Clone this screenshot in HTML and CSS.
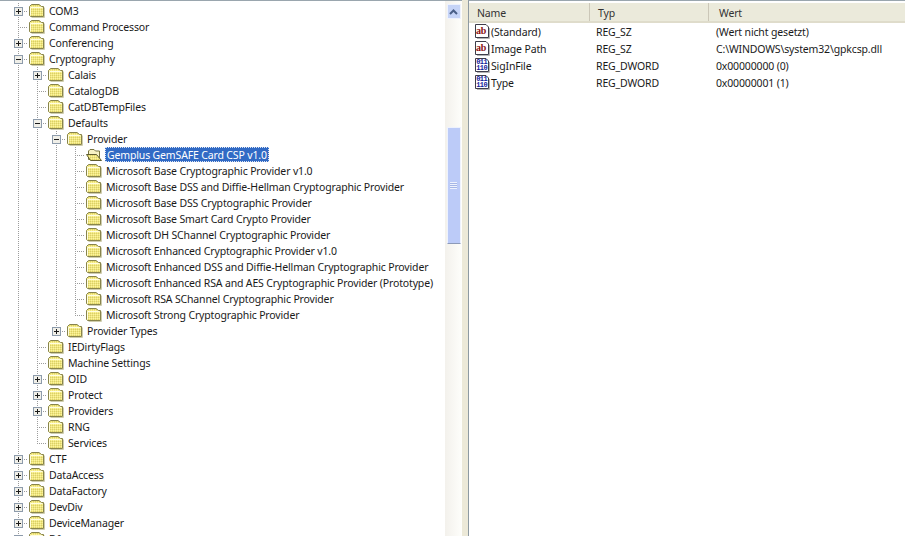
FILE: index.html
```html
<!DOCTYPE html>
<html lang="de">
<head>
<meta charset="utf-8">
<title>Registrierungs-Editor</title>
<link rel="stylesheet" href="styles.css">
</head>
<body>
<svg class="defs" width="0" height="0" aria-hidden="true">
  <defs>
    <pattern id="dither" width="2" height="2" patternUnits="userSpaceOnUse">
      <rect width="2" height="2" fill="#f2e67c"/>
      <rect width="1" height="1" fill="#d8cf6a"/>
      <rect x="1" y="1" width="1" height="1" fill="#faf3a0"/>
    </pattern>
    <symbol id="folder" viewBox="0 0 16 16">
      <path d="M0.5 12.5 V3.5 L2.5 1.5 H10 L12.5 3.5 H14.5 V13.5 H1.5 Z" fill="url(#dither)" stroke="#88844c"/>
      <path d="M1.5 4.5 H13.5 M1.5 4.5 V12.5" stroke="#fffde0" fill="none"/>
      <path d="M15.5 4.5 V14.5 H2.5" stroke="#cfcdae" fill="none"/>
    </symbol>
    <symbol id="folder-open" viewBox="0 0 16 16">
      <path d="M2.5 4 L4 2.5 H8 L9.5 4 H13.5 V12.5 H2.5 Z" fill="#f7f2c4" stroke="#77743f"/>
      <path d="M0.5 7.5 H10.5 L15.5 13.5 H4.5 Z" fill="url(#dither)" stroke="#5f5c30" stroke-linejoin="round"/>
    </symbol>
    <symbol id="plus" viewBox="0 0 9 9">
      <rect x="0.5" y="0.5" width="8" height="8" fill="#f0efe8" stroke="#8d9bab"/>
      <path d="M2 4.5 H7 M4.5 2 V7" stroke="#1a1a1a"/>
    </symbol>
    <symbol id="minus" viewBox="0 0 9 9">
      <rect x="0.5" y="0.5" width="8" height="8" fill="#f0efe8" stroke="#8d9bab"/>
      <path d="M2 4.5 H7" stroke="#1a1a1a"/>
    </symbol>
    <symbol id="val-sz" viewBox="0 0 16 16">
      <path d="M1.5 0.5 H12 L14.5 3 V13.5 H1.5 Z" fill="#fff" stroke="#3d3d4a"/>
      <path d="M15.5 4 V14.5 H3" fill="none" stroke="#b5b5b5"/>
      <text x="2" y="10" class="ico-ab">ab</text>
    </symbol>
    <symbol id="val-bin" viewBox="0 0 16 16">
      <path d="M1.5 0.5 H12 L14.5 3 V13.5 H1.5 Z" fill="#fff" stroke="#3d3d4a"/>
      <path d="M15.5 4 V14.5 H3" fill="none" stroke="#b5b5b5"/>
      <text x="2.2" y="6.4" class="ico-bin">011</text>
      <text x="2.2" y="12.4" class="ico-bin">110</text>
    </symbol>
  </defs>
</svg>
<main class="app">
  <section class="tree">
    <div class="row"><span class="cell tee"><svg class="exp"><use href="#plus"/></svg></span><svg class="fld"><use href="#folder"/></svg><span class="label">COM3</span></div>
    <div class="row"><span class="cell tee"></span><svg class="fld"><use href="#folder"/></svg><span class="label">Command Processor</span></div>
    <div class="row"><span class="cell tee"><svg class="exp"><use href="#plus"/></svg></span><svg class="fld"><use href="#folder"/></svg><span class="label">Conferencing</span></div>
    <div class="row"><span class="cell tee"><svg class="exp"><use href="#minus"/></svg></span><svg class="fld"><use href="#folder"/></svg><span class="label">Cryptography</span></div>
    <div class="row"><span class="cell bar"></span><span class="cell tee"><svg class="exp"><use href="#plus"/></svg></span><svg class="fld"><use href="#folder"/></svg><span class="label">Calais</span></div>
    <div class="row"><span class="cell bar"></span><span class="cell tee"></span><svg class="fld"><use href="#folder"/></svg><span class="label">CatalogDB</span></div>
    <div class="row"><span class="cell bar"></span><span class="cell tee"></span><svg class="fld"><use href="#folder"/></svg><span class="label">CatDBTempFiles</span></div>
    <div class="row"><span class="cell bar"></span><span class="cell tee"><svg class="exp"><use href="#minus"/></svg></span><svg class="fld"><use href="#folder"/></svg><span class="label">Defaults</span></div>
    <div class="row"><span class="cell bar"></span><span class="cell bar"></span><span class="cell tee"><svg class="exp"><use href="#minus"/></svg></span><svg class="fld"><use href="#folder"/></svg><span class="label">Provider</span></div>
    <div class="row"><span class="cell bar"></span><span class="cell bar"></span><span class="cell bar"></span><span class="cell tee"></span><svg class="fld"><use href="#folder-open"/></svg><span class="label selected">Gemplus GemSAFE Card CSP v1.0</span></div>
    <div class="row"><span class="cell bar"></span><span class="cell bar"></span><span class="cell bar"></span><span class="cell tee"></span><svg class="fld"><use href="#folder"/></svg><span class="label">Microsoft Base Cryptographic Provider v1.0</span></div>
    <div class="row"><span class="cell bar"></span><span class="cell bar"></span><span class="cell bar"></span><span class="cell tee"></span><svg class="fld"><use href="#folder"/></svg><span class="label">Microsoft Base DSS and Diffie-Hellman Cryptographic Provider</span></div>
    <div class="row"><span class="cell bar"></span><span class="cell bar"></span><span class="cell bar"></span><span class="cell tee"></span><svg class="fld"><use href="#folder"/></svg><span class="label">Microsoft Base DSS Cryptographic Provider</span></div>
    <div class="row"><span class="cell bar"></span><span class="cell bar"></span><span class="cell bar"></span><span class="cell tee"></span><svg class="fld"><use href="#folder"/></svg><span class="label">Microsoft Base Smart Card Crypto Provider</span></div>
    <div class="row"><span class="cell bar"></span><span class="cell bar"></span><span class="cell bar"></span><span class="cell tee"></span><svg class="fld"><use href="#folder"/></svg><span class="label">Microsoft DH SChannel Cryptographic Provider</span></div>
    <div class="row"><span class="cell bar"></span><span class="cell bar"></span><span class="cell bar"></span><span class="cell tee"></span><svg class="fld"><use href="#folder"/></svg><span class="label">Microsoft Enhanced Cryptographic Provider v1.0</span></div>
    <div class="row"><span class="cell bar"></span><span class="cell bar"></span><span class="cell bar"></span><span class="cell tee"></span><svg class="fld"><use href="#folder"/></svg><span class="label">Microsoft Enhanced DSS and Diffie-Hellman Cryptographic Provider</span></div>
    <div class="row"><span class="cell bar"></span><span class="cell bar"></span><span class="cell bar"></span><span class="cell tee"></span><svg class="fld"><use href="#folder"/></svg><span class="label">Microsoft Enhanced RSA and AES Cryptographic Provider (Prototype)</span></div>
    <div class="row"><span class="cell bar"></span><span class="cell bar"></span><span class="cell bar"></span><span class="cell tee"></span><svg class="fld"><use href="#folder"/></svg><span class="label">Microsoft RSA SChannel Cryptographic Provider</span></div>
    <div class="row"><span class="cell bar"></span><span class="cell bar"></span><span class="cell bar"></span><span class="cell end"></span><svg class="fld"><use href="#folder"/></svg><span class="label">Microsoft Strong Cryptographic Provider</span></div>
    <div class="row"><span class="cell bar"></span><span class="cell bar"></span><span class="cell end"><svg class="exp"><use href="#plus"/></svg></span><svg class="fld"><use href="#folder"/></svg><span class="label">Provider Types</span></div>
    <div class="row"><span class="cell bar"></span><span class="cell tee"></span><svg class="fld"><use href="#folder"/></svg><span class="label">IEDirtyFlags</span></div>
    <div class="row"><span class="cell bar"></span><span class="cell tee"></span><svg class="fld"><use href="#folder"/></svg><span class="label">Machine Settings</span></div>
    <div class="row"><span class="cell bar"></span><span class="cell tee"><svg class="exp"><use href="#plus"/></svg></span><svg class="fld"><use href="#folder"/></svg><span class="label">OID</span></div>
    <div class="row"><span class="cell bar"></span><span class="cell tee"><svg class="exp"><use href="#plus"/></svg></span><svg class="fld"><use href="#folder"/></svg><span class="label">Protect</span></div>
    <div class="row"><span class="cell bar"></span><span class="cell tee"><svg class="exp"><use href="#plus"/></svg></span><svg class="fld"><use href="#folder"/></svg><span class="label">Providers</span></div>
    <div class="row"><span class="cell bar"></span><span class="cell tee"></span><svg class="fld"><use href="#folder"/></svg><span class="label">RNG</span></div>
    <div class="row"><span class="cell bar"></span><span class="cell end"></span><svg class="fld"><use href="#folder"/></svg><span class="label">Services</span></div>
    <div class="row"><span class="cell tee"><svg class="exp"><use href="#plus"/></svg></span><svg class="fld"><use href="#folder"/></svg><span class="label">CTF</span></div>
    <div class="row"><span class="cell tee"><svg class="exp"><use href="#plus"/></svg></span><svg class="fld"><use href="#folder"/></svg><span class="label">DataAccess</span></div>
    <div class="row"><span class="cell tee"><svg class="exp"><use href="#plus"/></svg></span><svg class="fld"><use href="#folder"/></svg><span class="label">DataFactory</span></div>
    <div class="row"><span class="cell tee"><svg class="exp"><use href="#plus"/></svg></span><svg class="fld"><use href="#folder"/></svg><span class="label">DevDiv</span></div>
    <div class="row"><span class="cell tee"><svg class="exp"><use href="#plus"/></svg></span><svg class="fld"><use href="#folder"/></svg><span class="label">DeviceManager</span></div>
    <div class="row"><span class="cell tee"><svg class="exp"><use href="#plus"/></svg></span><svg class="fld"><use href="#folder"/></svg><span class="label">Dfrg</span></div>
  </section>
  <aside class="scrollbar">
    <div class="sb-btn"><svg class="sb-arrow" viewBox="0 0 9 6"><path d="M1 5 L4.5 1.5 L8 5" fill="none" stroke="#4a5f87" stroke-width="2"/></svg></div>
    <div class="sb-thumb"><span class="sb-grip"></span></div>
  </aside>
  <div class="splitter"></div>
  <section class="list">
    <div class="list-head">
      <div class="col col-name head-cell">Name</div>
      <div class="col col-type head-cell">Typ</div>
      <div class="col col-val head-cell head-last">Wert</div>
    </div>
    <div class="list-row"><div class="col col-name"><svg class="val-ico"><use href="#val-sz"/></svg><span>(Standard)</span></div><div class="col col-type">REG_SZ</div><div class="col col-val">(Wert nicht gesetzt)</div></div>
    <div class="list-row"><div class="col col-name"><svg class="val-ico"><use href="#val-sz"/></svg><span>Image Path</span></div><div class="col col-type">REG_SZ</div><div class="col col-val">C:\WINDOWS\system32\gpkcsp.dll</div></div>
    <div class="list-row"><div class="col col-name"><svg class="val-ico"><use href="#val-bin"/></svg><span>SigInFile</span></div><div class="col col-type">REG_DWORD</div><div class="col col-val">0x00000000 (0)</div></div>
    <div class="list-row"><div class="col col-name"><svg class="val-ico"><use href="#val-bin"/></svg><span>Type</span></div><div class="col col-type">REG_DWORD</div><div class="col col-val">0x00000001 (1)</div></div>
  </section>
</main>
</body>
</html>
```
FILE: styles.css
```css
html, body {
  margin: 0;
  height: 100%;
  background: #fff;
  overflow: hidden;
}
.defs { position: absolute; }
.ico-ab {
  font: bold 10px "Liberation Serif", serif;
  fill: #8a1010;
  letter-spacing: -0.3px;
}
.ico-bin {
  font: bold 7px "Liberation Mono", monospace;
  fill: #10209a;
  letter-spacing: -0.6px;
}
.app {
  display: flex;
  width: 905px;
  height: 536px;
  overflow: hidden;
  font: 10.5px/16px "Noto Sans", sans-serif;
  letter-spacing: -0.15px;
  color: #1a1a1a;
}
.tree {
  width: 436px;
  height: 533px;
  flex: none;
  padding: 2px 0 0 9px;
  border-top: 1px solid #9aa6ae;
  overflow: hidden;
}
.row {
  display: flex;
  align-items: center;
  height: 16px;
  white-space: nowrap;
}
.cell {
  flex: none;
  display: flex;
  align-items: center;
  width: 19px;
  height: 16px;
  background-repeat: no-repeat;
}
.bar {
  background-image: repeating-linear-gradient(to bottom, #9c9c9c 0 1px, transparent 1px 2px);
  background-size: 1px 16px;
  background-position: 9px 0;
}
.tee {
  background-image:
    repeating-linear-gradient(to bottom, #9c9c9c 0 1px, transparent 1px 2px),
    repeating-linear-gradient(to right, #9c9c9c 0 1px, transparent 1px 2px);
  background-size: 1px 16px, 10px 1px;
  background-position: 9px 0, 9px 8px;
}
.end {
  background-image:
    repeating-linear-gradient(to bottom, #9c9c9c 0 1px, transparent 1px 2px),
    repeating-linear-gradient(to right, #9c9c9c 0 1px, transparent 1px 2px);
  background-size: 1px 8px, 10px 1px;
  background-position: 9px 0, 9px 8px;
}
.exp {
  width: 9px;
  height: 9px;
  margin-left: 5px;
  flex: none;
}
.fld {
  width: 16px;
  height: 16px;
  margin-left: 1px;
  flex: none;
}
.label {
  align-self: flex-start;
  margin-left: 3px;
  padding: 0 1px;
  line-height: 17px;
  height: 15px;
}
.selected {
  padding: 0 2px 0 2px;
  margin-left: 3px;
  background: #316ac5;
  color: #fff;
  outline: 1px dotted #dfe6f2;
  outline-offset: -1px;
}
.scrollbar {
  width: 17px;
  height: 532px;
  flex: none;
  padding: 3px 0 0;
  border-top: 1px solid #9aa6ae;
  background: linear-gradient(to right, #f3f1ec, #fefefb);
  display: flex;
  flex-direction: column;
  align-items: center;
}
.sb-btn {
  width: 14px;
  height: 15px;
  flex: none;
  display: flex;
  align-items: center;
  justify-content: center;
  background: #c6d4f7;
  border: 1px solid #eef2fd;
  box-sizing: border-box;
}
.sb-arrow { width: 9px; height: 6px; }
.sb-thumb {
  width: 14px;
  height: 117px;
  margin-top: 108px;
  flex: none;
  box-sizing: border-box;
  display: flex;
  align-items: center;
  justify-content: center;
  background: #bccbf8;
  border: 1px solid #eef2fd;
  border-bottom-color: #8d9ab8;
}
.sb-grip {
  width: 7px;
  height: 7px;
  background: repeating-linear-gradient(to bottom, #eef2fd 0 1px, #a5b6e6 1px 2px);
}
.splitter {
  width: 6px;
  flex: none;
  background: #ece9d8;
}
.list {
  flex: 1;
  border-left: 1px solid #8e9aa2;
  border-top: 1px solid #9aa6ae;
  padding-top: 2px;
}
.list-head {
  display: flex;
  height: 18px;
  background: #ebeadb;
  border-bottom: 2px solid #dfdccb;
  line-height: 16px;
  color: #333;
}
.list-row {
  display: flex;
  align-items: center;
  height: 17px;
}
.col {
  flex: none;
  box-sizing: border-box;
  white-space: nowrap;
  display: flex;
  align-items: center;
}
.col-name { width: 121px; padding-left: 5px; }
.col-type { width: 119px; padding-left: 6px; }
.col-val { width: 196px; padding-left: 7px; }
.head-cell {
  padding-left: 8px;
  padding-top: 2px;
  border-right: 1px solid #cbc7b8;
  height: 18px;
}
.head-last { padding-left: 10px; border-right: 0; }
.val-ico {
  width: 16px;
  height: 16px;
  flex: none;
  margin-right: 1px;
}
```
